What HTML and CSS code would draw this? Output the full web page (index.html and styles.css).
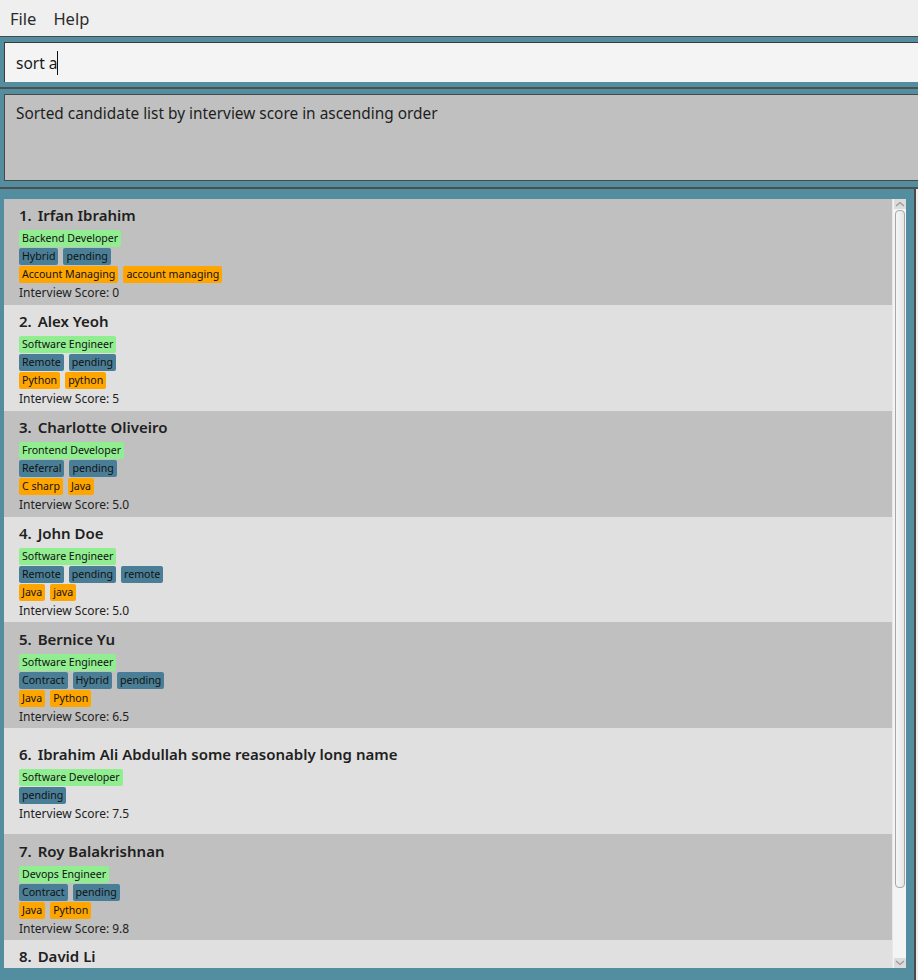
FILE: index.html
```html
<!DOCTYPE html>
<html>
<head>
<meta charset="utf-8">
<link rel="stylesheet" href="styles.css">
</head>
<body>
<div class="menubar">
  <span class="menu-item">File</span>
  <span class="menu-item">Help</span>
</div>
<div class="cmd-section">
  <div class="cmd-box"><span class="cmd-text">sort a</span><span class="caret"></span></div>
</div>
<div class="result-section">
  <div class="result-box">Sorted candidate list by interview score in ascending order</div>
</div>
<div class="list-section">
  <div class="list-panel">
    <div class="list-view">
      <div class="cells">
        <div class="cell odd">
          <div class="name"><span class="idx">1.</span> Irfan Ibrahim</div>
          <div class="tags"><span class="tag green">Backend Developer</span></div>
          <div class="tags"><span class="tag blue">Hybrid</span><span class="tag blue">pending</span></div>
          <div class="tags"><span class="tag orange">Account Managing</span><span class="tag orange">account managing</span></div>
          <div class="score">Interview Score: 0</div>
        </div>
        <div class="cell even">
          <div class="name"><span class="idx">2.</span> Alex Yeoh</div>
          <div class="tags"><span class="tag green">Software Engineer</span></div>
          <div class="tags"><span class="tag blue">Remote</span><span class="tag blue">pending</span></div>
          <div class="tags"><span class="tag orange">Python</span><span class="tag orange">python</span></div>
          <div class="score">Interview Score: 5</div>
        </div>
        <div class="cell odd">
          <div class="name"><span class="idx">3.</span> Charlotte Oliveiro</div>
          <div class="tags"><span class="tag green">Frontend Developer</span></div>
          <div class="tags"><span class="tag blue">Referral</span><span class="tag blue">pending</span></div>
          <div class="tags"><span class="tag orange">C sharp</span><span class="tag orange">Java</span></div>
          <div class="score">Interview Score: 5.0</div>
        </div>
        <div class="cell even">
          <div class="name"><span class="idx">4.</span> John Doe</div>
          <div class="tags"><span class="tag green">Software Engineer</span></div>
          <div class="tags"><span class="tag blue">Remote</span><span class="tag blue">pending</span><span class="tag blue">remote</span></div>
          <div class="tags"><span class="tag orange">Java</span><span class="tag orange">java</span></div>
          <div class="score">Interview Score: 5.0</div>
        </div>
        <div class="cell odd">
          <div class="name"><span class="idx">5.</span> Bernice Yu</div>
          <div class="tags"><span class="tag green">Software Engineer</span></div>
          <div class="tags"><span class="tag blue">Contract</span><span class="tag blue">Hybrid</span><span class="tag blue">pending</span></div>
          <div class="tags"><span class="tag orange">Java</span><span class="tag orange">Python</span></div>
          <div class="score">Interview Score: 6.5</div>
        </div>
        <div class="cell even">
          <div class="name"><span class="idx">6.</span> Ibrahim Ali Abdullah some reasonably long name</div>
          <div class="tags"><span class="tag green">Software Developer</span></div>
          <div class="tags"><span class="tag blue">pending</span></div>
          <div class="score">Interview Score: 7.5</div>
        </div>
        <div class="cell odd">
          <div class="name"><span class="idx">7.</span> Roy Balakrishnan</div>
          <div class="tags"><span class="tag green">Devops Engineer</span></div>
          <div class="tags"><span class="tag blue">Contract</span><span class="tag blue">pending</span></div>
          <div class="tags"><span class="tag orange">Java</span><span class="tag orange">Python</span></div>
          <div class="score">Interview Score: 9.8</div>
        </div>
        <div class="cell even partial">
          <div class="name"><span class="idx">8.</span> David Li</div>
        </div>
      </div>
      <div class="scrollbar">
        <div class="sb-btn"><svg width="10" height="6" viewBox="0 0 10 6"><path d="M1 5 L5 1.5 L9 5" fill="none" stroke="#9a9a9a" stroke-width="1.3"/></svg></div>
        <div class="sb-track"><div class="sb-thumb"></div></div>
        <div class="sb-btn"><svg width="10" height="6" viewBox="0 0 10 6"><path d="M1 1 L5 4.5 L9 1" fill="none" stroke="#9a9a9a" stroke-width="1.3"/></svg></div>
      </div>
    </div>
  </div>
</div>
</body>
</html>
```
FILE: styles.css
```css
* { box-sizing: border-box; }
html, body { margin: 0; padding: 0; }
body {
  width: 918px;
  height: 980px;
  overflow: hidden;
  background: #528ea0;
  font-family: "Noto Sans", "Open Sans", sans-serif;
  color: #1e1e1e;
}
.menubar {
  height: 37px;
  background: #efefef;
  border-bottom: 1px solid #484848;
  display: flex;
  align-items: center;
  padding-left: 10px;
  gap: 17px;
  font-size: 16.5px;
  color: #2b2b2b;
}
.cmd-section {
  padding: 5px 0 5px 4px;
}
.cmd-box {
  height: 40px;
  background: #f4f4f4;
  border-top: 1px solid #3a3a3a;
  border-left: 1px solid #3a3a3a;
  display: flex;
  align-items: center;
  padding-left: 11px;
  font-size: 15.5px;
  color: #1a1a1a;
}
.caret {
  display: inline-block;
  width: 1px;
  height: 24px;
  background: #111;
  margin-left: -1px;
}
.result-section {
  border-top: 2px solid #4f4f4f;
  padding: 5px 0 6px 4px;
}
.result-box {
  height: 87px;
  background: #c0c0c0;
  border: 1px solid #484848;
  border-right: none;
  padding: 8px 0 0 11px;
  font-size: 15.4px;
  color: #1e1e1e;
}
.list-section {
  border-top: 2px solid #4f4f4f;
  background: #efefef;
  height: 793px;
}
.list-panel {
  width: 916px;
  height: 100%;
  background: #528ea0;
  border-right: 2px solid #4a4a4a;
  padding: 10px 0 0 4px;
}
.list-view {
  width: 902px;
  height: 769px;
  display: flex;
  overflow: hidden;
}
.cells {
  width: 888px;
  height: 769px;
  overflow: hidden;
}
.cell {
  height: 105.86px;
  display: flex;
  flex-direction: column;
  justify-content: center;
  padding-left: 15px;
  padding-top: 3px;
}
.cell.partial {
  justify-content: flex-start;
  padding-top: 6px;
}
.cell.odd { background: #c0c0c0; }
.cell.even { background: #e0e0e0; }
.name {
  font-size: 15px;
  font-weight: 600;
  line-height: 20px;
  height: 20px;
  margin-bottom: 5px;
  color: #202020;
  white-space: nowrap;
}
.idx { margin-right: 2px; }
.tags {
  display: flex;
  gap: 5px;
  height: 17px;
  margin-bottom: 1px;
}
.tag {
  height: 17px;
  line-height: 17px;
  font-size: 10.6px;
  padding: 0 3px;
  border-radius: 2px;
  color: #111;
  white-space: nowrap;
}
.tag.green { background: #90ee90; }
.tag.blue { background: #4a7e96; }
.tag.orange { background: #ffa500; }
.score {
  font-size: 12px;
  line-height: 16px;
  height: 16px;
  margin-top: 1px;
  color: #222;
}
.scrollbar {
  width: 14px;
  height: 769px;
  background: #f4f4f4;
  border-left: 1px solid #e8e8e8;
  display: flex;
  flex-direction: column;
  align-items: center;
}
.sb-btn {
  width: 12px;
  height: 10px;
  background: #dcdcdc;
  display: flex;
  align-items: center;
  justify-content: center;
  flex: 0 0 auto;
}
.sb-track {
  flex: 1;
  width: 12px;
  padding: 1px 1px 70px;
  display: flex;
}
.sb-thumb {
  flex: 1;
  border: 1px solid #a8a8a8;
  border-radius: 4px;
  background: linear-gradient(to right, #f6f6f6, #e6e6e6);
}
```
